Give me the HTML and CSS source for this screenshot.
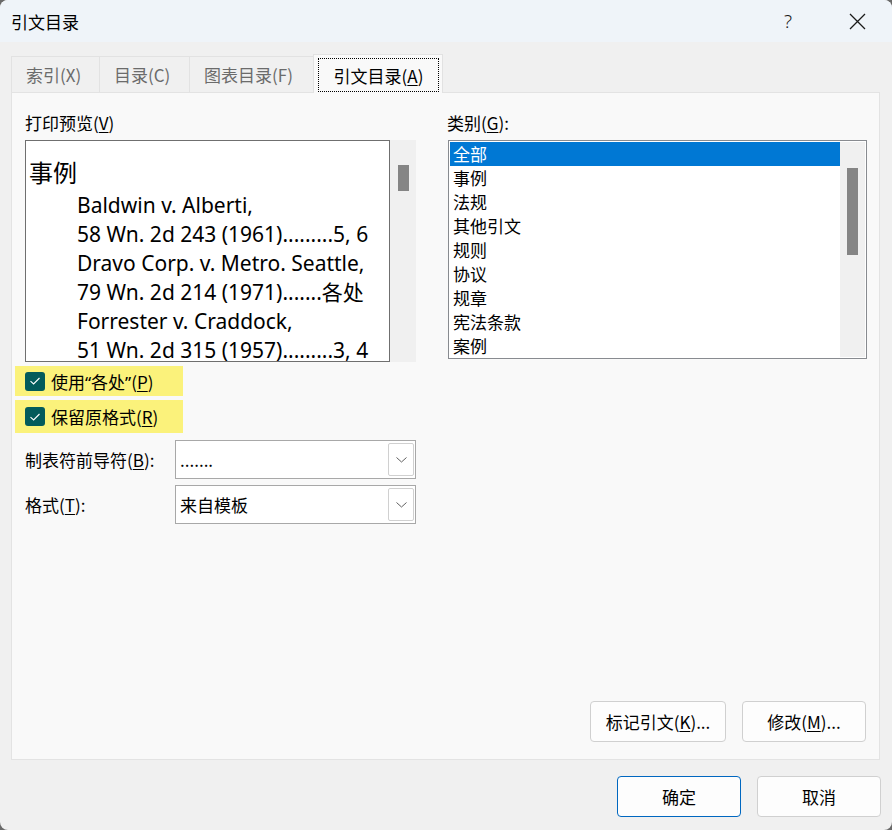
FILE: index.html
```html
<!DOCTYPE html>
<html lang="zh-CN">
<head>
    <meta charset="UTF-8">
    <title>引文目录</title>
    <link rel="stylesheet" href="styles.css">
</head>
<body>
    <div class="window">
        <div class="titlebar">
            <span class="title">引文目录</span>
            <span class="help">?</span>
            <span class="close">
                <svg width="17" height="17" viewBox="0 0 17 17"><path d="M1 1 L16 16 M16 1 L1 16" stroke="#1a1a1a" stroke-width="1.3" fill="none"/></svg>
            </span>
        </div>

        <div class="tabs">
            <div class="tab">索引(X)</div>
            <div class="tab">目录(C)</div>
            <div class="tab">图表目录(F)</div>
            <div class="tab active"><span class="focus">引文目录(<u>A</u>)</span></div>
        </div>

        <div class="panel">
            <div class="columns">
                <div class="col-left">
                    <div class="label">打印预览(<u>V</u>)</div>
                    <div class="preview-row">
                        <div class="preview">
                            <div class="preview-head">事例</div>
                            <div class="preview-line">Baldwin v. Alberti,</div>
                            <div class="preview-line">58 Wn. 2d 243 (1961).........5, 6</div>
                            <div class="preview-line">Dravo Corp. v. Metro. Seattle,</div>
                            <div class="preview-line">79 Wn. 2d 214 (1971).......各处</div>
                            <div class="preview-line">Forrester v. Craddock,</div>
                            <div class="preview-line">51 Wn. 2d 315 (1957).........3, 4</div>
                        </div>
                        <div class="scrollbar"><div class="thumb thumb-preview"></div></div>
                    </div>

                    <div class="check-row first">
                        <span class="checkbox">
                            <svg width="12" height="10" viewBox="0 0 12 10"><path d="M1.5 5.2 L4.6 8 L10.5 2" stroke="#ffffff" stroke-width="1.1" fill="none"/></svg>
                        </span>
                        <span>使用<span class="quote">“</span>各处<span class="quote">”</span>(<u>P</u>)</span>
                    </div>
                    <div class="check-row second">
                        <span class="checkbox">
                            <svg width="12" height="10" viewBox="0 0 12 10"><path d="M1.5 5.2 L4.6 8 L10.5 2" stroke="#ffffff" stroke-width="1.1" fill="none"/></svg>
                        </span>
                        <span>保留原格式(<u>R</u>)</span>
                    </div>

                    <div class="field-row first">
                        <span class="field-label">制表符前导符(<u>B</u>):</span>
                        <div class="combo">
                            <span class="combo-value">.......</span>
                            <span class="combo-btn">
                                <svg width="11" height="6" viewBox="0 0 11 6"><path d="M0.5 0.5 L5.5 5 L10.5 0.5" stroke="#606060" stroke-width="1" fill="none"/></svg>
                            </span>
                        </div>
                    </div>
                    <div class="field-row">
                        <span class="field-label">格式(<u>T</u>):</span>
                        <div class="combo">
                            <span class="combo-value">来自模板</span>
                            <span class="combo-btn">
                                <svg width="11" height="6" viewBox="0 0 11 6"><path d="M0.5 0.5 L5.5 5 L10.5 0.5" stroke="#606060" stroke-width="1" fill="none"/></svg>
                            </span>
                        </div>
                    </div>
                </div>

                <div class="col-right">
                    <div class="label">类别(<u>G</u>):</div>
                    <div class="listbox">
                        <div class="items">
                            <div class="item selected">全部</div>
                            <div class="item">事例</div>
                            <div class="item">法规</div>
                            <div class="item">其他引文</div>
                            <div class="item">规则</div>
                            <div class="item">协议</div>
                            <div class="item">规章</div>
                            <div class="item">宪法条款</div>
                            <div class="item">案例</div>
                        </div>
                        <div class="scrollbar list-scroll"><div class="thumb thumb-list"></div></div>
                    </div>
                </div>
            </div>

            <div class="panel-actions">
                <button class="btn btn-mark">标记引文(<u>K</u>)...</button>
                <button class="btn btn-edit">修改(<u>M</u>)...</button>
            </div>
        </div>

        <div class="footer">
            <button class="btn btn-ok">确定</button>
            <button class="btn">取消</button>
        </div>
    </div>
</body>
</html>
```

FILE: styles.css
```css
* {
    margin: 0;
    padding: 0;
    box-sizing: border-box;
}

html, body {
    width: 892px;
    height: 830px;
    background: #6a6a6a;
    overflow: hidden;
}

body {
    font-family: "Noto Sans CJK SC", "Noto Sans", sans-serif;
    font-size: 17px;
    color: #000;
}

u {
    text-decoration-thickness: 1px;
    text-underline-offset: 2px;
}

.window {
    width: 892px;
    height: 830px;
    background: #f0f0f0;
    border-radius: 8px;
    overflow: hidden;
    display: flex;
    flex-direction: column;
}

/* barra de titulo */
.titlebar {
    height: 42px;
    background: #eff4f9;
    display: flex;
    align-items: center;
    padding-left: 11px;
}

.title {
    font-size: 17px;
    flex: 1;
}

.help {
    font-family: "Noto Sans", sans-serif;
    font-weight: 300;
    font-size: 19px;
    color: #1a1a1a;
    margin-right: 57px;
}

.close {
    display: flex;
    margin-right: 26px;
}

/* abas */
.tabs {
    height: 50px;
    display: flex;
    align-items: flex-end;
    padding-left: 11px;
}

.tab {
    height: 36px;
    padding: 0 14px;
    display: flex;
    align-items: center;
    color: #6b6b6b;
    background: #f0f0f0;
    border: 1px solid #e2e2e2;
    border-bottom: none;
    margin-right: -1px;
}

.tab:nth-child(1) { width: 89px; }
.tab:nth-child(2) { width: 91px; }
.tab:nth-child(3) { width: 125px; }

.tab.active {
    width: 130px;
    height: 39px;
    margin-bottom: -1px;
    padding: 3px 3px 1px 4px;
    background: #f9f9f9;
    color: #000;
    position: relative;
    z-index: 1;
}

.focus {
    flex: 1;
    height: 100%;
    border: 1px dotted #000;
    display: flex;
    align-items: center;
    justify-content: center;
}

/* painel */
.panel {
    height: 668px;
    margin: 0 12px 0 11px;
    background: #f9f9f9;
    border: 1px solid #e3e3e3;
    padding: 18px 12px 17px 13px;
    display: flex;
    flex-direction: column;
}

.columns {
    display: flex;
    gap: 31px;
}

.col-left {
    width: 391px;
    display: flex;
    flex-direction: column;
}

.col-right {
    width: 420px;
}

.label {
    height: 24px;
    line-height: 24px;
    margin-bottom: 5px;
}

.preview-row {
    display: flex;
    height: 222px;
}

.preview {
    width: 365px;
    background: #fff;
    border: 1px solid #6f6f6f;
    padding: 12px 0 0 3px;
    overflow: hidden;
}

.preview-head {
    font-size: 24px;
    line-height: 38px;
}

.preview-line {
    font-family: "Noto Sans", "Noto Sans CJK SC", sans-serif;
    font-size: 21px;
    line-height: 29px;
    margin-left: 48px;
    white-space: nowrap;
}

.scrollbar {
    width: 26px;
    background: #f0f0f0;
    display: flex;
    justify-content: center;
}

.thumb {
    width: 11px;
    background: #858585;
}

.thumb-preview {
    height: 26px;
    margin-top: 25px;
}

/* checkboxes */
.check-row {
    display: flex;
    align-items: center;
    gap: 6px;
    width: 168px;
    margin-left: -10px;
    padding-left: 10px;
    background: #fbf27b;
}

.check-row.first {
    height: 30px;
    margin-top: 4px;
}

.check-row.second {
    height: 33px;
    margin-top: 4px;
}

.quote {
    font-family: "Noto Sans", sans-serif;
}

.checkbox {
    width: 20px;
    height: 19px;
    border-radius: 3px;
    background: #035b5b;
    display: flex;
    align-items: center;
    justify-content: center;
}

/* combos */
.field-row {
    display: flex;
    align-items: center;
    justify-content: space-between;
    margin-top: 6px;
}

.field-row.first {
    margin-top: 7px;
}

.combo {
    width: 241px;
    height: 39px;
    background: #fff;
    border: 1px solid #a8a8a8;
    display: flex;
    align-items: center;
    padding: 2px 1px 2px 4px;
}

.combo-value {
    flex: 1;
}

.combo-btn {
    width: 26px;
    height: 100%;
    border: 1px solid #d0d0d0;
    border-radius: 2px;
    display: flex;
    align-items: center;
    justify-content: center;
}

/* lista de categorias */
.listbox {
    margin-left: 1px;
    height: 219px;
    border: 1px solid #888b90;
    background: #fff;
    display: flex;
    padding: 1px;
}

.items {
    flex: 1;
}

.item {
    height: 24px;
    line-height: 24px;
    padding-left: 3px;
}

.item.selected {
    background: #0078d4;
    color: #fff;
}

.list-scroll {
    width: 25px;
}

.thumb-list {
    height: 87px;
    margin-top: 26px;
}

/* botoes */
.panel-actions {
    margin-top: auto;
    display: flex;
    justify-content: flex-end;
    gap: 16px;
    padding-right: 1px;
}

.btn {
    font-family: "Noto Sans CJK SC", "Noto Sans", sans-serif;
    font-size: 17px;
    color: #000;
    height: 41px;
    width: 124px;
    background: #fdfdfd;
    border: 1px solid #d0d0d0;
    border-radius: 4px;
}

.btn-mark {
    width: 136px;
}

.btn-ok {
    border-color: #0067c0;
}

.footer {
    display: flex;
    justify-content: flex-end;
    gap: 16px;
    padding: 16px 11px 0 0;
}
```
